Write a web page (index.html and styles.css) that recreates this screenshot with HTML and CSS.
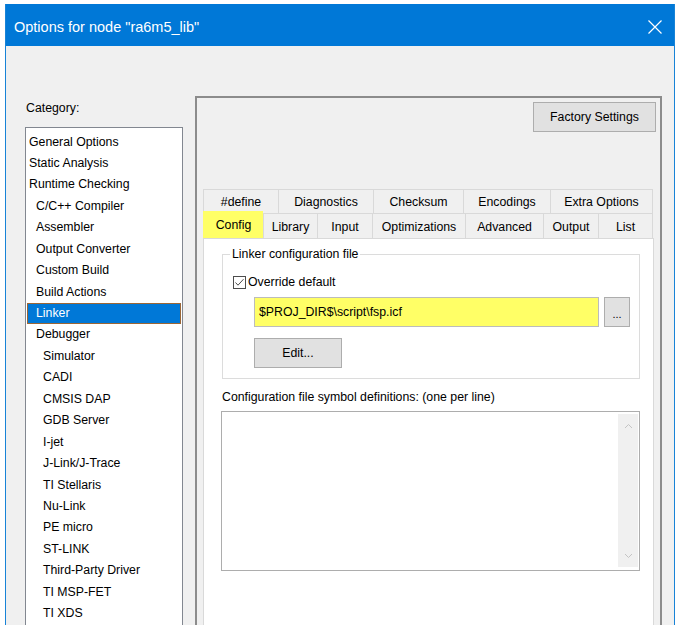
FILE: index.html
```html
<!DOCTYPE html>
<html>
<head>
<meta charset="utf-8">
<title>Options for node "ra6m5_lib"</title>
<link rel="stylesheet" href="styles.css">
</head>
<body>
<div class="window">
  <div class="titlebar">
    <span class="title">Options for node "ra6m5_lib"</span>
    <svg class="close" width="14" height="14" viewBox="0 0 14 14"><path d="M0.5 0.5 L13.5 13.5 M13.5 0.5 L0.5 13.5" stroke="#fff" stroke-width="1.2" fill="none"/></svg>
  </div>
  <div class="content">
    <div class="left">
      <div class="cat-label">Category:</div>
      <ul class="catlist">
        <li class="l0">General Options</li>
        <li class="l0">Static Analysis</li>
        <li class="l0">Runtime Checking</li>
        <li class="l1">C/C++ Compiler</li>
        <li class="l1">Assembler</li>
        <li class="l1">Output Converter</li>
        <li class="l1">Custom Build</li>
        <li class="l1">Build Actions</li>
        <li class="l1 selected">Linker</li>
        <li class="l1">Debugger</li>
        <li class="l2">Simulator</li>
        <li class="l2">CADI</li>
        <li class="l2">CMSIS DAP</li>
        <li class="l2">GDB Server</li>
        <li class="l2">I-jet</li>
        <li class="l2">J-Link/J-Trace</li>
        <li class="l2">TI Stellaris</li>
        <li class="l2">Nu-Link</li>
        <li class="l2">PE micro</li>
        <li class="l2">ST-LINK</li>
        <li class="l2">Third-Party Driver</li>
        <li class="l2">TI MSP-FET</li>
        <li class="l2">TI XDS</li>
      </ul>
    </div>
    <div class="panel">
      <div class="panel-top"><div class="btn factory">Factory Settings</div></div>
      <div class="tabs">
        <div class="tabrow row1">
          <div class="tab">#define</div>
          <div class="tab">Diagnostics</div>
          <div class="tab">Checksum</div>
          <div class="tab">Encodings</div>
          <div class="tab last">Extra Options</div>
        </div>
        <div class="tabrow row2">
          <div class="tab active">Config</div>
          <div class="tab">Library</div>
          <div class="tab">Input</div>
          <div class="tab">Optimizations</div>
          <div class="tab">Advanced</div>
          <div class="tab">Output</div>
          <div class="tab last">List</div>
        </div>
      </div>
      <div class="tabpage">
        <fieldset class="group">
          <legend>Linker configuration file</legend>
          <div class="check">
            <svg width="13" height="13" viewBox="0 0 13 13"><rect x="0.5" y="0.5" width="12" height="12" fill="#fff" stroke="#4d4d4d"/><path d="M2.5 6.5 L5 9.2 L10.5 3.2" stroke="#4d4d4d" stroke-width="1" fill="none"/></svg>
            <span>Override default</span>
          </div>
          <div class="pathrow">
            <div class="pathinput">$PROJ_DIR$\script\fsp.icf</div>
            <div class="btn browse">...</div>
          </div>
          <div class="btn edit">Edit...</div>
        </fieldset>
        <div class="deflabel">Configuration file symbol definitions: (one per line)</div>
        <div class="textarea">
          <div class="vscroll">
            <svg width="9" height="6" viewBox="0 0 9 6"><polyline points="1,5 4.5,1.5 8,5" fill="none" stroke="#c4c4c4" stroke-width="1"/></svg>
            <svg width="9" height="6" viewBox="0 0 9 6"><polyline points="1,1 4.5,4.5 8,1" fill="none" stroke="#c4c4c4" stroke-width="1"/></svg>
          </div>
        </div>
      </div>
    </div>
  </div>
</div>
</body>
</html>
```

FILE: styles.css
```css
* { box-sizing: border-box; }
html, body { margin: 0; padding: 0; background: #ffffff; }
body {
  font-family: "Segoe UI", "Liberation Sans", Arial, sans-serif;
  font-size: 12.3px;
  color: #000;
}
.window {
  margin: 4px 0 0 5px;
  width: 670px;
  height: 621px;
  border-left: 1px solid #1883d7;
  border-right: 1px solid #1883d7;
  background: #f0f0f0;
  overflow: hidden;
  display: flex;
  flex-direction: column;
}
.titlebar {
  height: 42px;
  flex: none;
  background: #0078d7;
  color: #fff;
  display: flex;
  align-items: center;
  padding: 4px 12px 0 8px;
}
.title { font-size: 14.5px; flex: 1; }
.close { display: block; }
.content {
  flex: 1;
  display: flex;
  padding-left: 19px;
  gap: 12px;
  min-height: 0;
}
.left {
  width: 158px;
  flex: none;
  padding-top: 52px;
  display: flex;
  flex-direction: column;
}
.cat-label { height: 20px; line-height: 20px; margin-bottom: 9px; padding-left: 1px; }
.catlist {
  flex: 1;
  list-style: none;
  margin: 0;
  padding: 3.5px 0 0 0;
  border: 1px solid #828790;
  background: #fff;
}
.catlist li {
  height: 21.45px;
  line-height: 21.45px;
  margin: 0 1px;
  white-space: nowrap;
}
.catlist .l0 { padding-left: 2px; }
.catlist .l1 { padding-left: 9px; }
.catlist .l2 { padding-left: 16px; }
.catlist .selected {
  background: #0078d7;
  color: #fff;
  box-shadow: inset 0 0 0 1px #9a6636;
}
.panel {
  width: 467px;
  flex: none;
  margin-top: 50px;
  border: 2px solid #8c8c8c;
  border-bottom: none;
  background: #f0f0f0;
  padding: 4px 4px 0 6px;
  display: flex;
  flex-direction: column;
}
.panel-top { display: flex; justify-content: flex-end; }
.btn {
  background: #e1e1e1;
  border: 1px solid #adadad;
  display: flex;
  align-items: center;
  justify-content: center;
}
.factory { width: 123px; height: 30px; }
.tabs { margin-top: 57px; width: 450px; }
.tabrow { display: grid; }
.row1 { grid-template-columns: 75px 95px 90px 87px 103px; height: 24px; }
.row2 { grid-template-columns: 60px 54px 55px 93px 78px 55px 55px; height: 25px; }
.tab {
  border-top: 1px solid #d9d9d9;
  border-left: 1px solid #d9d9d9;
  background: #f0f0f0;
  display: flex;
  align-items: center;
  justify-content: center;
  white-space: nowrap;
  padding-top: 1px;
}
.tab.last { border-right: 1px solid #d9d9d9; }
.tab.active {
  background: #ffff66;
  border-color: #ffff66;
  margin-top: -2px;
  height: 27px;
  padding-top: 0;
  position: relative;
  z-index: 1;
}
.tabpage {
  flex: 1;
  margin-right: 2px;
  background: #fff;
  border: 1px solid #d9d9d9;
  border-bottom: none;
  padding: 7px 13px 0 18px;
}
.group {
  margin: 0;
  padding: 0 0 10px 0;
  border: 1px solid #dcdcdc;
  min-width: 0;
}
.group legend {
  margin-left: 7px;
  padding: 0 2px;
  line-height: 16px;
  height: 16px;
}
.check {
  display: flex;
  align-items: center;
  height: 16px;
  margin-top: 12px;
  margin-left: 10px;
  gap: 2px;
}
.check svg { display: block; }
.pathrow {
  display: flex;
  margin-top: 7px;
  margin-left: 31px;
  gap: 5px;
}
.pathinput {
  width: 345px;
  height: 30px;
  background: #ffff66;
  border: 1px solid #bcbcbc;
  padding-left: 4px;
  line-height: 28px;
}
.browse { width: 26px; height: 30px; font-size: 11px; padding-top: 3px; }
.edit { width: 88px; height: 30px; margin-top: 11px; margin-left: 31px; }
.deflabel { margin-top: 10px; line-height: 16px; height: 16px; }
.textarea {
  margin-top: 6px;
  margin-left: -1px;
  width: 419px;
  height: 160px;
  border: 1px solid #adadad;
  display: flex;
  justify-content: flex-end;
  padding: 2px 1px 3px 0;
}
.vscroll {
  width: 20px;
  background: #f0f0f0;
  display: flex;
  flex-direction: column;
  justify-content: space-between;
  align-items: center;
  padding: 9px 0 8px;
}
.vscroll svg { display: block; }
```
